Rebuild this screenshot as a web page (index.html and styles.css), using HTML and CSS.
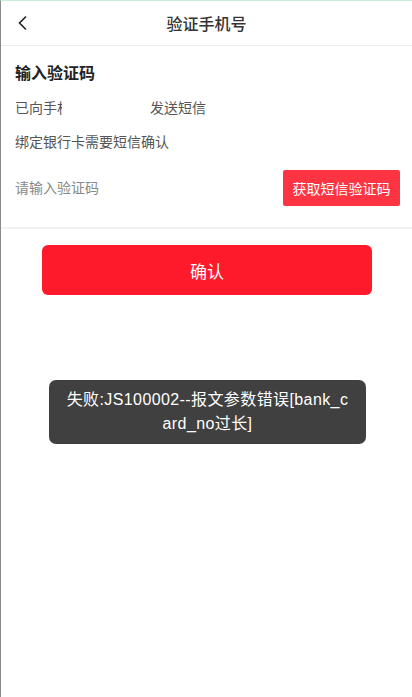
FILE: index.html
```html
<!DOCTYPE html>
<html>
  <head>
    <meta charset="utf-8">
    <title>验证手机号</title>
    <link rel="stylesheet" href="styles.css">
  </head>
  <body>
    <header class="topbar">
      <a class="back" href="#">
        <svg width="12" height="16" viewBox="0 0 12 16"><path d="M9 1.5 2.5 8 9 14.5" fill="none" stroke="#222" stroke-width="1.6"/></svg>
      </a>
      <h1>验证手机号</h1>
    </header>
    <section class="verify">
      <h2>输入验证码</h2>
      <p class="tip">已向手<span class="cut">机</span><span class="masked"></span>发送短信</p>
      <p class="tip">绑定银行卡需要短信确认</p>
      <div class="code-row">
        <input class="code-input" type="text" placeholder="请输入验证码">
        <button type="button" class="send-btn">获取短信验证码</button>
      </div>
    </section>
    <div class="actions">
      <button type="button" class="confirm-btn">确认</button>
    </div>
    <div class="toast">失败:JS100002--报文参数错误[bank_card_no过长]</div>
  </body>
</html>
```

FILE: styles.css
```css
* {
  margin: 0;
  padding: 0;
  box-sizing: border-box;
}
html, body {
  height: 100%;
}
body {
  font-family: "Liberation Sans", "Noto Sans CJK SC", sans-serif;
  font-size: 14px;
  color: #333;
  background: #fff;
  border-left: 1px solid #8a8a8a;
  border-top: 1px solid #c4f0da;
  position: relative;
}
.topbar {
  height: 45px;
  display: flex;
  align-items: center;
  justify-content: center;
  position: relative;
  border-bottom: 1px solid #ececec;
}
.topbar h1 {
  font-size: 16px;
  font-weight: 500;
  color: #333;
}
.back {
  position: absolute;
  left: 16px;
  top: 14px;
  display: flex;
}
.verify {
  padding: 17px 14px 0 14px;
  border-bottom: 2px solid #f2f2f2;
}
.verify h2 {
  font-size: 16px;
  font-weight: bold;
  color: #222;
  line-height: 22px;
  margin-bottom: 13px;
}
.tip {
  font-size: 14px;
  color: #555;
  line-height: 20px;
  margin-bottom: 14px;
}
.cut {
  display: inline-block;
  width: 5px;
  overflow: hidden;
  vertical-align: top;
}
.masked {
  display: inline-block;
  width: 88px;
}
.code-row {
  display: flex;
  align-items: center;
  justify-content: space-between;
  padding: 0 0 21px 0;
  margin-top: 18px;
}
.code-input {
  border: none;
  outline: none;
  font-family: inherit;
  font-size: 14px;
  color: #333;
  width: 150px;
}
.code-input::placeholder {
  color: #888;
}
.send-btn {
  width: 117px;
  height: 36px;
  border: none;
  border-radius: 2px;
  background: #fe3443;
  color: #fff;
  font-family: inherit;
  font-size: 14px;
  margin-right: -2px;
}
.actions {
  padding: 16px 40px 0 41px;
}
.confirm-btn {
  width: 100%;
  height: 50px;
  border: none;
  border-radius: 6px;
  background: #fe1a2a;
  color: #fff;
  font-family: inherit;
  font-size: 17px;
}
.toast {
  position: absolute;
  left: 48px;
  top: 379px;
  width: 317px;
  padding: 8px 15px;
  border-radius: 7px;
  background: #404040;
  color: #fff;
  font-size: 16px;
  line-height: 24px;
  letter-spacing: 0.4px;
  text-align: center;
  word-break: break-all;
}
```
